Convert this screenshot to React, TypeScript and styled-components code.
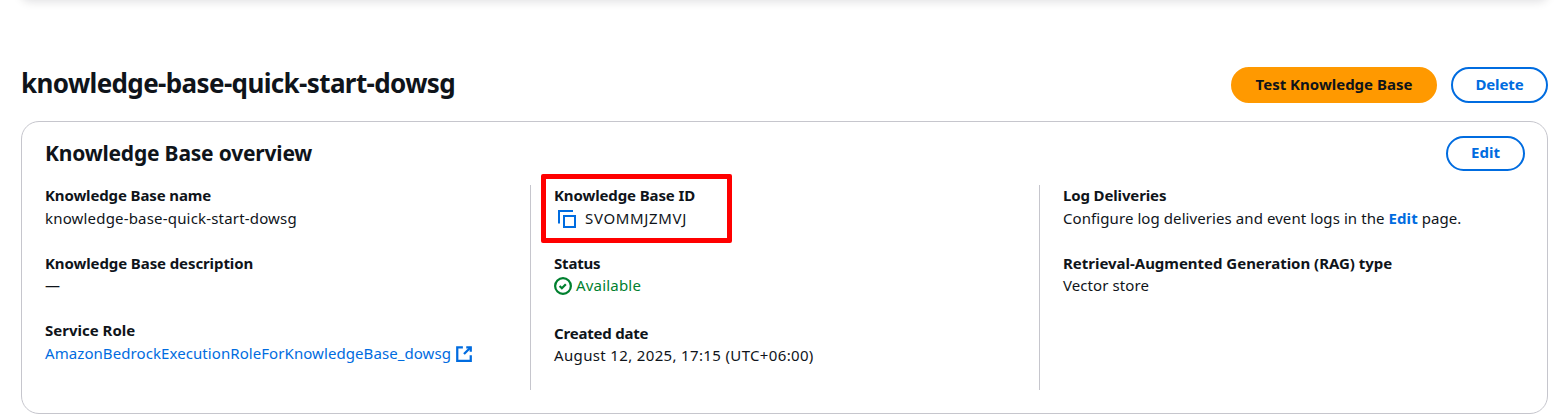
import React from 'react';
import styled, { createGlobalStyle } from 'styled-components';

const GlobalStyle = createGlobalStyle`
  * { box-sizing: border-box; }
  body {
    margin: 0;
    background: #fff;
    color: #0f141a;
    font-family: 'Noto Sans', 'Open Sans', sans-serif;
    font-size: 15px;
    line-height: 22px;
    overflow: hidden;
  }
  h1, h2, dl, dt, dd { margin: 0; }
`;

const Page = styled.main`
  height: 420px;
  padding: 0 6px 0 21px;
  overflow: hidden;
`;

const FlashbarEdge = styled.div`
  height: 20px;
  margin-top: -20px;
  border-radius: 16px;
  box-shadow: 0 1px 10px 1px rgba(0, 7, 22, 0.12);
`;

const PageHeader = styled.header`
  display: flex;
  justify-content: space-between;
  padding-top: 67px;
  height: 121px;
`;

const Title = styled.h1`
  font-size: 26px;
  font-weight: 700;
  line-height: 32px;
  letter-spacing: -0.62px;
`;

const Actions = styled.div`
  display: flex;
  gap: 14px;
`;

const Button = styled.button<{ $primary?: boolean; $width: number; $height?: number; $track?: number }>`
  width: ${p => p.$width}px;
  height: ${p => p.$height ?? 36}px;
  padding: 0 0 3px;
  border: 2px solid ${p => (p.$primary ? '#ff9900' : '#006ce0')};
  border-radius: 18px;
  background: ${p => (p.$primary ? '#ff9900' : '#fff')};
  color: ${p => (p.$primary ? '#0f141a' : '#006ce0')};
  font: 700 15px/22px 'Noto Sans', sans-serif;
  letter-spacing: ${p => p.$track ?? 0}px;
`;

const Card = styled.section`
  height: 293px;
  border: 1px solid #c6c6cd;
  border-radius: 18px;
  padding: 14px 22px 0 23px;
`;

const CardHeader = styled.div`
  display: flex;
  justify-content: space-between;
  height: 49px;
`;

const CardTitle = styled.h2`
  font-size: 21px;
  font-weight: 700;
  line-height: 34px;
  letter-spacing: -0.2px;
`;

const Columns = styled.div`
  display: grid;
  grid-template-columns: 485px 509px 1fr;
  height: 205px;
`;

const Column = styled.dl<{ $divided?: boolean }>`
  display: flex;
  flex-direction: column;
  gap: 23px;
  padding-left: ${p => (p.$divided ? 23 : 0)}px;
  border-left: ${p => (p.$divided ? '1px solid #c6c6cd' : '0')};
`;

const Pair = styled.div<{ $gapTop?: number }>`
  margin-top: ${p => p.$gapTop ?? 0}px;
  white-space: nowrap;

  &:first-child { margin-top: -1px; }
`;

const Label = styled.dt<{ $track?: number; $tight?: boolean }>`
  height: ${p => (p.$tight ? 21 : 22)}px;
  font-weight: 700;
  letter-spacing: ${p => p.$track ?? 0}px;
`;

const Value = styled.dd<{ $track?: number }>`
  display: flex;
  align-items: center;
  height: 23px;
  letter-spacing: ${p => p.$track ?? 0}px;
`;

const HighlightFrame = styled.div`
  position: absolute;
  top: -10px;
  left: -13px;
  width: 191px;
  height: 69px;
  border: 5px solid #ff0000;
  border-radius: 2px;
`;

const HighlightedPair = styled(Pair)`
  position: relative;
`;

const Link = styled.a<{ $strong?: boolean }>`
  display: inline-flex;
  align-items: center;
  gap: 4px;
  color: #006ce0;
  font-weight: ${p => (p.$strong ? 700 : 400)};
`;

const CopyValue = styled.span`
  display: flex;
  align-items: center;
  gap: 9px;
  padding-left: 4px;
`;

const Status = styled.span`
  display: flex;
  align-items: center;
  gap: 4px;
  color: #00802f;
`;

const Icon = styled.svg`
  width: 18px;
  height: 18px;
  flex: none;
  margin-top: 2px;
  fill: none;
  stroke: currentColor;
  stroke-width: 2;
`;

const LinkIcon = styled(Icon)`
  color: #006ce0;
`;

const CopyIcon = () => (
  <LinkIcon viewBox="0 0 18 18">
    <path d="M1 13.5V1h14" />
    <path d="M6 6h11v11H6z" />
  </LinkIcon>
);

const SuccessIcon = () => (
  <Icon viewBox="0 0 16 16">
    <circle cx="8" cy="8" r="7" />
    <path d="M5 8l2 2 3.521-3.521" />
  </Icon>
);

const ExternalIcon = () => (
  <LinkIcon viewBox="0 0 16 16">
    <path d="M10 2h4v4" />
    <path d="M8 8l6-6" />
    <path d="M14 9.048V14H2V2h5" />
  </LinkIcon>
);

export default function App() {
  return (
    <>
      <GlobalStyle />
      <Page>
        <FlashbarEdge />
        <PageHeader>
          <Title>knowledge-base-quick-start-dowsg</Title>
          <Actions>
            <Button $primary $width={206}>Test Knowledge Base</Button>
            <Button $width={97} $track={-0.1}>Delete</Button>
          </Actions>
        </PageHeader>
        <Card>
          <CardHeader>
            <CardTitle>Knowledge Base overview</CardTitle>
            <Button $width={79} $height={35}>Edit</Button>
          </CardHeader>
          <Columns>
            <Column>
              <Pair>
                <Label $track={-0.13}>Knowledge Base name</Label>
                <Value $track={0.18}>knowledge-base-quick-start-dowsg</Value>
              </Pair>
              <Pair>
                <Label $tight $track={-0.1}>Knowledge Base description</Label>
                <Value>—</Value>
              </Pair>
              <Pair>
                <Label>Service Role</Label>
                <Value $track={0.075}>
                  <Link>AmazonBedrockExecutionRoleForKnowledgeBase_dowsg<ExternalIcon /></Link>
                </Value>
              </Pair>
            </Column>
            <Column $divided>
              <HighlightedPair>
                <Label $track={-0.12}>Knowledge Base ID</Label>
                <Value $track={0.66}><CopyValue><CopyIcon />SVOMMJZMVJ</CopyValue></Value>
                <HighlightFrame />
              </HighlightedPair>
              <Pair>
                <Label $tight $track={-0.2}>Status</Label>
                <Value $track={0.19}><Status><SuccessIcon />Available</Status></Value>
              </Pair>
              <Pair $gapTop={3}>
                <Label $tight $track={-0.2}>Created date</Label>
                <Value $track={0.35}>August 12, 2025, 17:15 (UTC+06:00)</Value>
              </Pair>
            </Column>
            <Column $divided>
              <Pair>
                <Label $track={-0.14}>Log Deliveries</Label>
                <Value $track={0.08}>
                  <span>Configure log deliveries and event logs in the <Link $strong>Edit</Link> page.</span>
                </Value>
              </Pair>
              <Pair>
                <Label $tight $track={-0.02}>Retrieval-Augmented Generation (RAG) type</Label>
                <Value $track={0.08}>Vector store</Value>
              </Pair>
            </Column>
          </Columns>
        </Card>
      </Page>
    </>
  );
}
